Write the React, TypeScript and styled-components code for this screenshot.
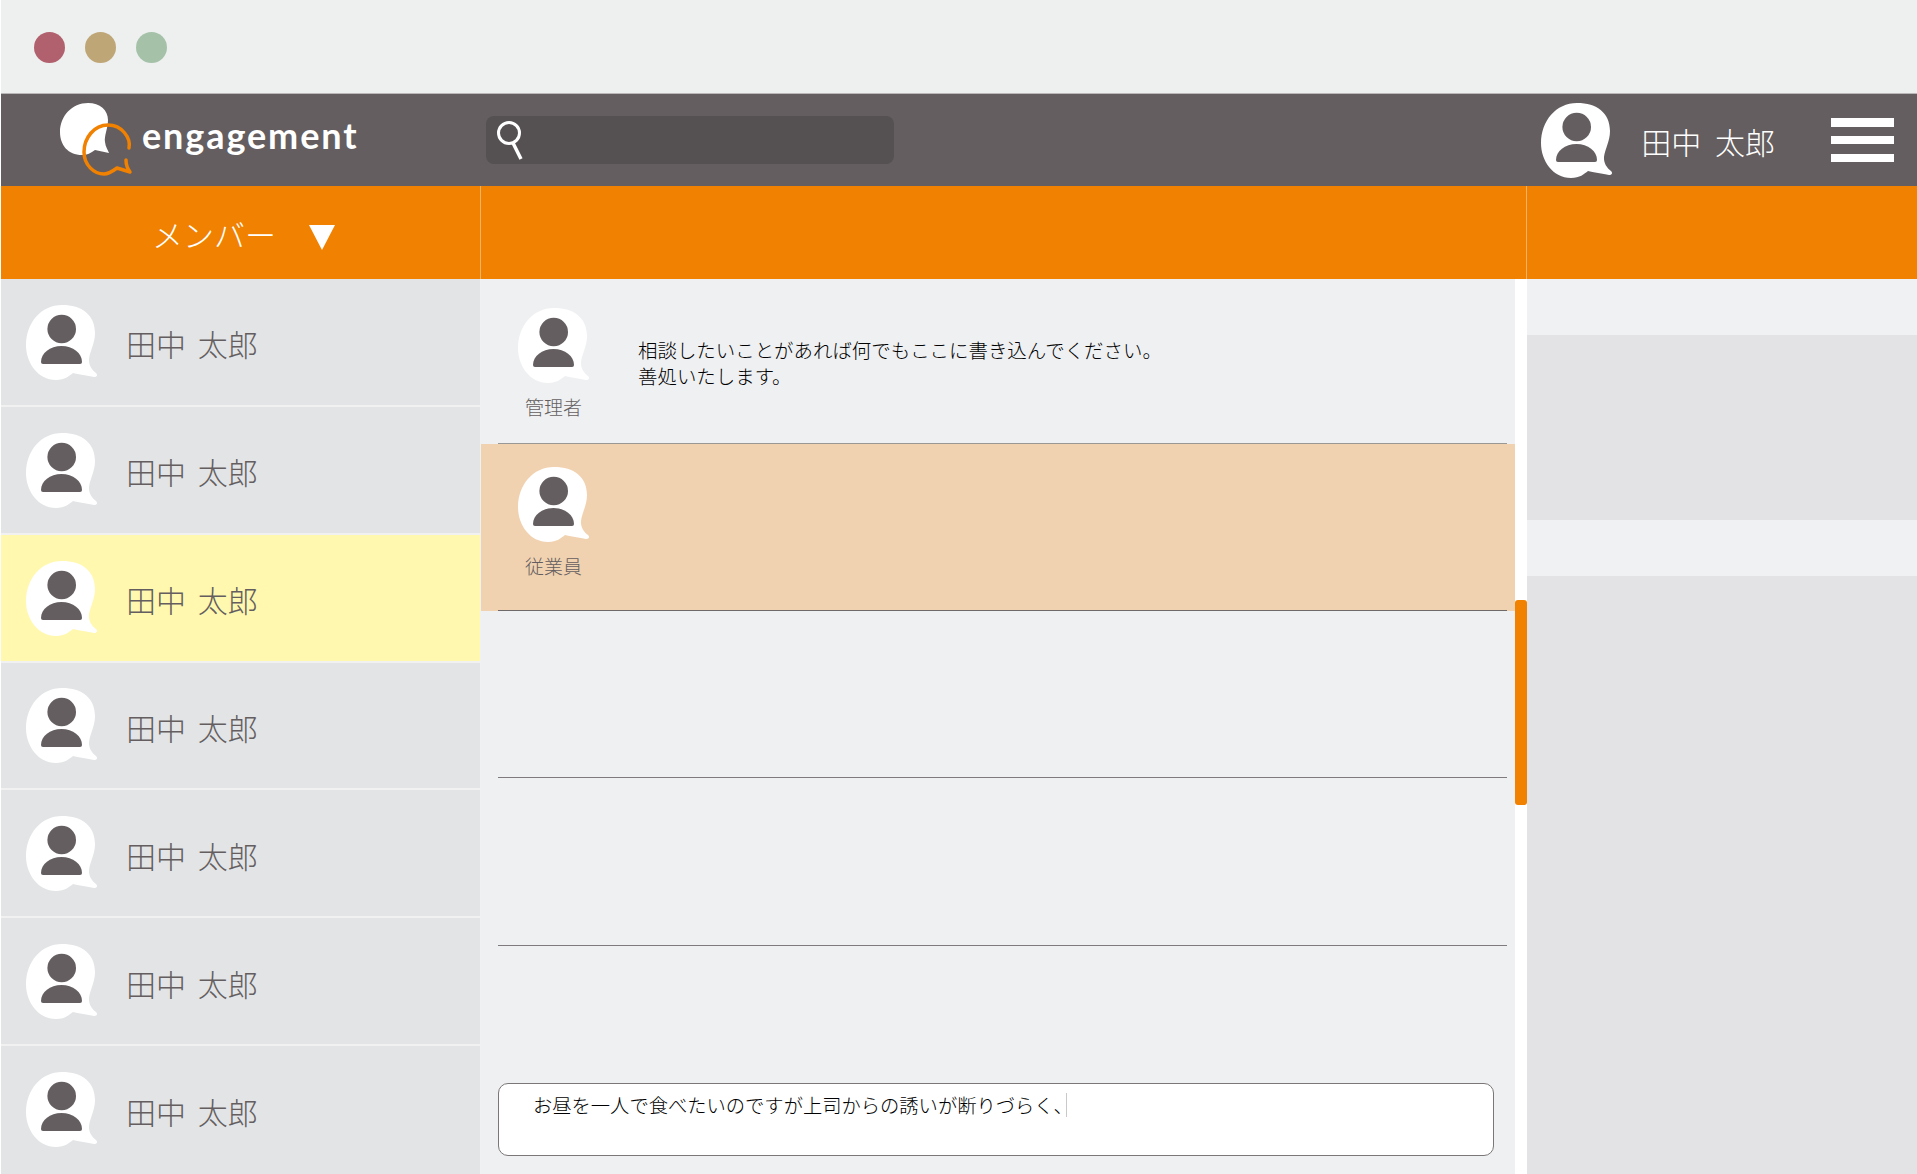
import styled, { createGlobalStyle } from 'styled-components';

const ink = '#645e60';
const orange = '#f18100';

const GlobalStyle = createGlobalStyle`
    html, body {
        margin: 0;
        padding: 0;
        background: #fff;
        font-family: "Noto Sans CJK JP", "Noto Sans", sans-serif;
    }
`;

const Page = styled.div`
    width: 1917px;
    height: 1174px;
    overflow: hidden;
    padding-left: 1px;
    box-sizing: border-box;
    display: grid;
    grid-template-rows: 93px 93px 93px 1fr;
`;

const WindowBar = styled.div`
    background: #eef0ef;
    display: flex;
    align-items: center;
    gap: 20px;
    padding: 1px 0 0 32.5px;
`;

const WindowDot = styled.span<{ $color: string }>`
    width: 31px;
    height: 31px;
    border-radius: 50%;
    background: ${props => props.$color};
`;

const Header = styled.header`
    background: ${ink};
    border-top: 1px solid #b9b7b7;
    box-sizing: border-box;
    display: grid;
    grid-template-columns: 485px 408px 1fr;
    align-items: center;
`;

const Brand = styled.div`
    display: flex;
    align-items: flex-start;
    padding-left: 57px;
    height: 100%;
`;

const LogoMark = styled.svg`
    width: 76px;
    height: 78px;
    margin-top: 6px;
`;

const BrandName = styled.span`
    font-family: "Lato", sans-serif;
    font-weight: 700;
    font-size: 36px;
    line-height: 40px;
    letter-spacing: 1.9px;
    color: #fff;
    margin: 21px 0 0 8px;
`;

const SearchBox = styled.div`
    height: 48px;
    background: #555051;
    border-radius: 8px;
    display: flex;
    align-items: center;
    padding-left: 10px;
`;

const Account = styled.div`
    display: flex;
    align-items: center;
    justify-content: flex-end;
    padding: 2px 23px 0 0;
`;

const AccountName = styled.span`
    font-size: 30px;
    font-weight: 300;
    word-spacing: 7px;
    color: #fff;
    margin: 0 56px 0 28px;
    line-height: 40px;
`;

const MenuButton = styled.div`
    width: 63px;
    height: 44px;
    margin-top: -2px;
    display: flex;
    flex-direction: column;
    justify-content: space-between;
`;

const MenuBar = styled.span`
    height: 8.5px;
    background: #fff;
`;

const TitleBand = styled.div`
    background: ${orange};
    display: grid;
    grid-template-columns: 480px 1046px 1fr;
`;

const TitleCell = styled.div`
    border-right: 1px solid #f8b266;
    display: flex;
    align-items: center;
    justify-content: flex-start;
    padding-left: 151px;
    gap: 33px;
    &:last-child {
        border-right: 0;
    }
`;

const TitleText = styled.span`
    color: #fff;
    font-size: 31px;
    font-weight: 300;
    line-height: 40px;
    margin-top: 3px;
`;

const Triangle = styled.span`
    width: 0;
    height: 0;
    border-left: 13.5px solid transparent;
    border-right: 13.5px solid transparent;
    border-top: 25px solid #fff;
    margin-top: 10px;
`;

const Body = styled.div`
    display: grid;
    grid-template-columns: 480px 1034px 12px 1fr;
    min-height: 0;
`;

const Sidebar = styled.aside`
    display: grid;
    grid-template-rows: repeat(7, 1fr);
    border-right: 1px solid #f0f1f3;
`;

const MemberRow = styled.div<{ $active?: boolean }>`
    background: ${props => (props.$active ? '#fff8ae' : '#e3e4e6')};
    border-bottom: 2px solid #f1f1f2;
    display: flex;
    align-items: center;
    padding: 2px 0 0 25px;
    gap: 28px;
    &:last-child {
        border-bottom-color: transparent;
    }
`;

const MemberName = styled.span`
    font-size: 30px;
    font-weight: 300;
    word-spacing: 5px;
    color: ${ink};
    line-height: 40px;
    margin-top: 1px;
`;

const AvatarIcon = styled.svg`
    width: 72px;
    height: 76px;
    flex: none;
    display: block;
`;

const Thread = styled.main`
    background: #eff0f2;
    display: flex;
    flex-direction: column;
    min-height: 0;
`;

const MessageRow = styled.div<{ $peach?: boolean; $height: number }>`
    height: ${props => props.$height}px;
    background: ${props => (props.$peach ? '#f1d2b0' : 'transparent')};
    padding: 0 8px 0 17px;
    box-sizing: border-box;
`;

const MessageInner = styled.div<{ $top: number; $line: string }>`
    height: 100%;
    box-sizing: border-box;
    border-bottom: 1.5px solid ${props => props.$line};
    padding: ${props => props.$top}px 0 0 20px;
    display: flex;
    gap: 48px;
`;

const Sender = styled.div`
    width: 72px;
    display: flex;
    flex-direction: column;
    align-items: center;
`;

const SenderLabel = styled.span`
    font-size: 19px;
    font-weight: 300;
    color: ${ink};
    line-height: 26px;
    margin: 10px 1px 0 0;
    white-space: nowrap;
`;

const MessageText = styled.p`
    margin: 29px 0 0;
    font-size: 19.45px;
    font-weight: 300;
    line-height: 26px;
    color: #000;
`;

const Composer = styled.div`
    margin: auto 21px 18px 17px;
    height: 73px;
    box-sizing: border-box;
    background: #fff;
    border: 1px solid #7b7677;
    border-radius: 10px;
    padding: 9px 0 0 34px;
    display: flex;
    align-items: flex-start;
`;

const ComposerText = styled.span`
    font-size: 19.3px;
    font-weight: 300;
    line-height: 24px;
    color: #000;
`;

const Caret = styled.span`
    width: 1px;
    height: 24px;
    margin-left: -7px;
    background: #c9c9c9;
`;

const ScrollTrack = styled.div`
    background: #fff;
    padding-top: 321px;
`;

const ScrollThumb = styled.div`
    height: 205px;
    background: ${orange};
    border-radius: 3px;
`;

const SidePanel = styled.aside`
    display: grid;
    grid-template-rows: 56px 185px 56px 1fr;
`;

const PanelBand = styled.div<{ $dark?: boolean }>`
    background: ${props => (props.$dark ? '#e3e3e5' : '#f0f1f3')};
`;

const Avatar = ({ bubble = '#fff' }: { bubble?: string }) => (
    <AvatarIcon viewBox="0 0 72 76">
        <path
            fill={bubble}
            d="M36 0C56 0 69 10 69 28C69 38 64 46 63 54C62.5 60 66 65 70 68C72 70 71 72 68 72C62 71 52 69 47 68C43 71 39 75 30 75C12 75 0 58 0 40C0 18 15 0 36 0Z"
        />
        <circle cx="35.7" cy="24" r="14.3" fill={ink} />
        <path
            fill={ink}
            d="M15 57C15 48 24 41 35.5 41C47 41 56 48 56 57Q56 59 54 59L17 59Q15 59 15 57Z"
        />
    </AvatarIcon>
);

const Logo = () => (
    <LogoMark viewBox="0 0 76 78">
        <path
            fill="#fff"
            d="M30 3C42 3 50 10 50 20C50 28 46 36 47 42C47.5 47 50 50 51 53L37 50C33 53 29 55 24 55C10 55 2 45 2 32C2 16 14 3 30 3Z"
        />
        <path
            fill="none"
            stroke={orange}
            strokeWidth="3.5"
            strokeLinecap="round"
            strokeLinejoin="round"
            d="M71 48C73 38 64 25 50 25C36 25 26 38 26 52C26 65 36 74 46 74C51 74 55 71 59 68L72 72C69 68 68 65 68 60"
        />
    </LogoMark>
);

const SearchIcon = () => (
    <svg width="28" height="40" viewBox="0 0 28 40">
        <circle cx="13" cy="13" r="10.5" fill="none" stroke="#fff" strokeWidth="3" />
        <path d="M17 23L25 39" stroke="#fff" strokeWidth="3.5" fill="none" />
    </svg>
);

const members = [false, false, true, false, false, false, false];

const App = () => {
    return (
        <Page>
            <GlobalStyle />
            <WindowBar>
                <WindowDot $color="#b1616d" />
                <WindowDot $color="#bfa677" />
                <WindowDot $color="#a5c2a9" />
            </WindowBar>
            <Header>
                <Brand>
                    <Logo />
                    <BrandName>engagement</BrandName>
                </Brand>
                <SearchBox>
                    <SearchIcon />
                </SearchBox>
                <Account>
                    <Avatar />
                    <AccountName>田中 太郎</AccountName>
                    <MenuButton>
                        <MenuBar />
                        <MenuBar />
                        <MenuBar />
                    </MenuButton>
                </Account>
            </Header>
            <TitleBand>
                <TitleCell>
                    <TitleText>メンバー</TitleText>
                    <Triangle />
                </TitleCell>
                <TitleCell />
                <TitleCell />
            </TitleBand>
            <Body>
                <Sidebar>
                    {members.map((active, i) => (
                        <MemberRow key={i} $active={active}>
                            <Avatar />
                            <MemberName>田中 太郎</MemberName>
                        </MemberRow>
                    ))}
                </Sidebar>
                <Thread>
                    <MessageRow $height={165}>
                        <MessageInner $top={29} $line="#9a9897">
                            <Sender>
                                <Avatar />
                                <SenderLabel>管理者</SenderLabel>
                            </Sender>
                            <MessageText>
                                相談したいことがあれば何でもここに書き込んでください。
                                <br />
                                善処いたします。
                            </MessageText>
                        </MessageInner>
                    </MessageRow>
                    <MessageRow $height={167} $peach>
                        <MessageInner $top={23} $line="#6f696a">
                            <Sender>
                                <Avatar />
                                <SenderLabel>従業員</SenderLabel>
                            </Sender>
                        </MessageInner>
                    </MessageRow>
                    <MessageRow $height={167}>
                        <MessageInner $top={0} $line="#7f7a7b" />
                    </MessageRow>
                    <MessageRow $height={168}>
                        <MessageInner $top={0} $line="#7f7a7b" />
                    </MessageRow>
                    <Composer>
                        <ComposerText>お昼を一人で食べたいのですが上司からの誘いが断りづらく、</ComposerText>
                        <Caret />
                    </Composer>
                </Thread>
                <ScrollTrack>
                    <ScrollThumb />
                </ScrollTrack>
                <SidePanel>
                    <PanelBand />
                    <PanelBand $dark />
                    <PanelBand />
                    <PanelBand $dark />
                </SidePanel>
            </Body>
        </Page>
    );
};

export default App;
